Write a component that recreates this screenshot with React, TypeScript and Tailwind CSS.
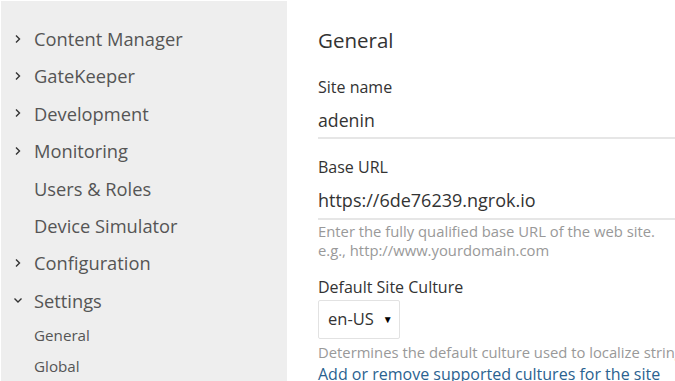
import React from "react";

const Chevron = ({ down }: { down?: boolean }) => (
  <svg width="10" height="10" viewBox="0 0 10 10" className="shrink-0">
    {down ? (
      <path d="M1.5 3.5 L5 7 L8.5 3.5" fill="none" stroke="#333" strokeWidth="1.4" />
    ) : (
      <path d="M3 1.5 L6.5 5 L3 8.5" fill="none" stroke="#333" strokeWidth="1.4" />
    )}
  </svg>
);

const items: { label: string; chev?: "r" | "d" }[] = [
  { label: "Content Manager", chev: "r" },
  { label: "GateKeeper", chev: "r" },
  { label: "Development", chev: "r" },
  { label: "Monitoring", chev: "r" },
  { label: "Users & Roles" },
  { label: "Device Simulator" },
  { label: "Configuration", chev: "r" },
  { label: "Settings", chev: "d" },
];

export default function App() {
  return (
    <div
      className="flex w-[675px] h-[381px] overflow-hidden bg-white"
      style={{ fontFamily: '"Open Sans", "Noto Sans", sans-serif' }}
    >
      <aside className="w-[287px] shrink-0 bg-[#eeeeee] pt-[19px] border-l border-t border-white">
        {items.map((it) => (
          <div key={it.label} className="flex items-center h-[37.4px] pl-[12px] text-[18.3px] text-[#555]">
            <span className="w-[21px] flex items-center">
              {it.chev === "r" && <Chevron />}
              {it.chev === "d" && <Chevron down />}
            </span>
            <span>{it.label}</span>
          </div>
        ))}
        <div className="pl-[33px] text-[15.2px] text-[#555]">
          <div className="h-[31px] flex items-center mt-[1px]">General</div>
          <div className="h-[31px] flex items-center">Global</div>
        </div>
      </aside>
      <main className="flex-1 pl-[31px] pt-[26px] text-[#333]">
        <h1 className="text-[20.5px] leading-[28px]">General</h1>
        <div className="mt-[23px] text-[16px] leading-[20px]">Site name</div>
        <div className="mt-[10px] text-[17.7px] leading-[26px] pb-[4px] border-b-2 border-[#e6e6e6]">adenin</div>
        <div className="mt-[18px] text-[16px] leading-[20px]">Base URL</div>
        <div className="mt-[10px] text-[18px] leading-[26px] pb-[5px] border-b-2 border-[#e6e6e6] whitespace-nowrap">https://6de76239.ngrok.io</div>
        <div className="mt-[2px] text-[14.8px] leading-[19px] text-[#999] whitespace-nowrap">
          Enter the fully qualified base URL of the web site.
          <br />
          e.g., http://www.yourdomain.com
        </div>
        <div className="mt-[17px] text-[16px] leading-[20px]">Default Site Culture</div>
        <div className="mt-[3px] w-[82px] h-[39px] border border-[#e2e2e2] rounded-[2px] flex items-center pl-[9px] gap-[9px] text-[16.5px] text-[#333]">
          <span>en-US</span>
          <span className="text-[10px] text-black">▼</span>
        </div>
        <div className="mt-[4px] text-[14.8px] leading-[19px] text-[#999] whitespace-nowrap">
          Determines the default culture used to localize strings
        </div>
        <div className="mt-[2px] text-[16px] leading-[20px] text-[#2b6290] whitespace-nowrap">
          Add or remove supported cultures for the site
        </div>
      </main>
    </div>
  );
}
